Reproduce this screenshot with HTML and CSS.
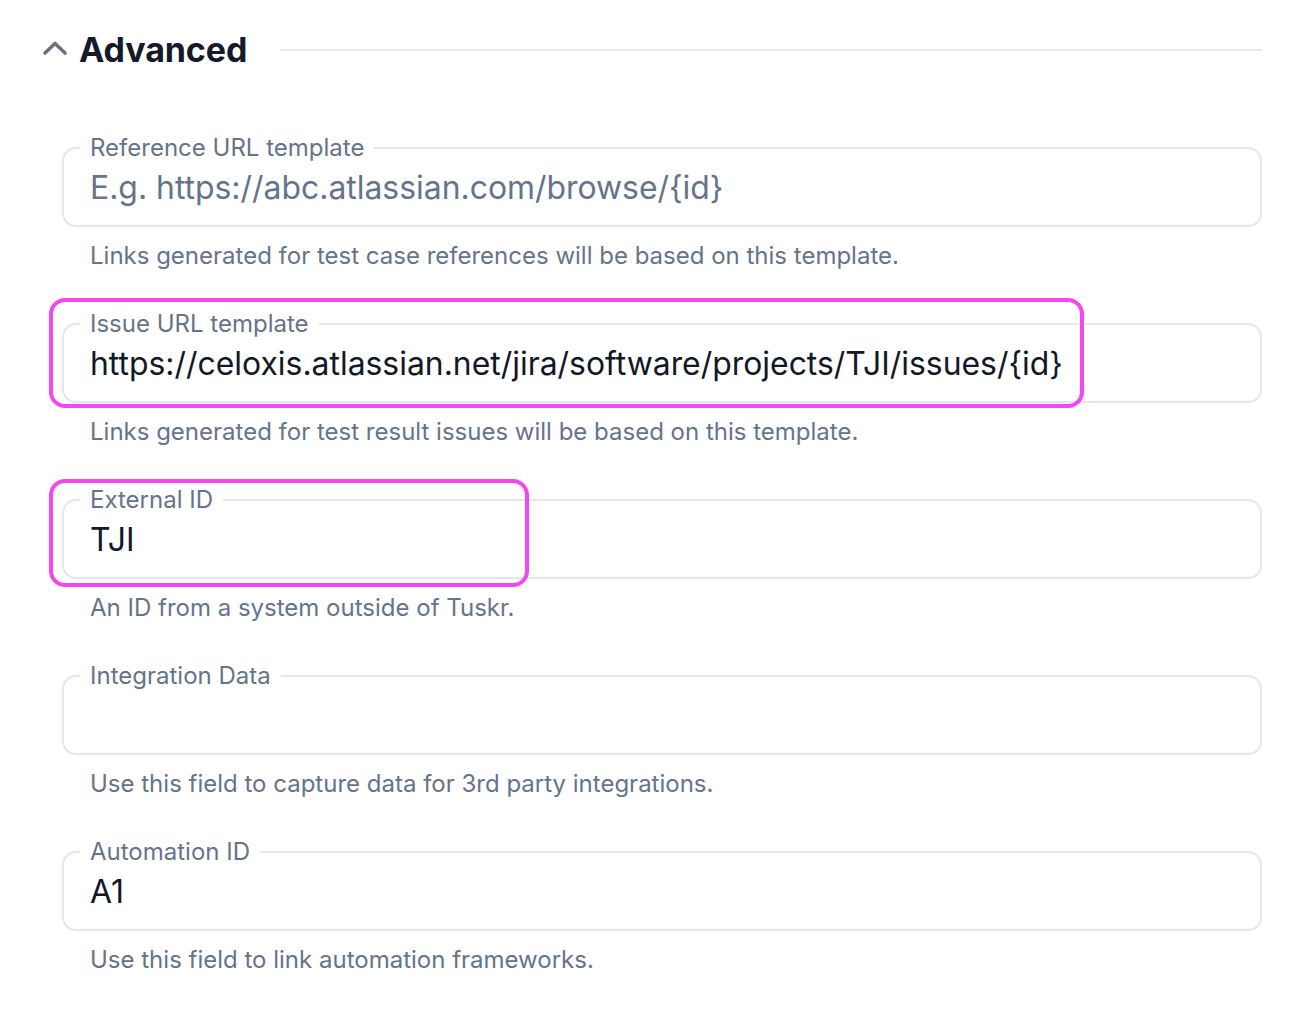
FILE: index.html
```html
<!DOCTYPE html>
<html>
<head>
    <title>Advanced</title>
    <link rel="stylesheet" href="styles.css">
</head>
<body>
    <div class="panel">
        <div class="section-head">
            <svg class="chevron" width="26" height="16" viewBox="0 0 26 16">
                <path d="M3 13 L13 3.5 L23 13" fill="none" stroke="#6b7280" stroke-width="3.6" stroke-linecap="round" stroke-linejoin="round"/>
            </svg>
            <h2>Advanced</h2>
            <div class="rule"></div>
        </div>

        <div class="fields">
            <div class="field">
                <fieldset>
                    <legend>Reference URL template</legend>
                    <input type="text" placeholder="E.g. https://abc.atlassian.com/browse/{id}">
                </fieldset>
                <p class="hint">Links generated for test case references will be based on this template.</p>
            </div>

            <div class="field">
                <div class="highlight highlight-issue"></div>
                <fieldset>
                    <legend>Issue URL template</legend>
                    <input type="text" value="https://celoxis.atlassian.net/jira/software/projects/TJI/issues/{id}">
                </fieldset>
                <p class="hint">Links generated for test result issues will be based on this template.</p>
            </div>

            <div class="field">
                <div class="highlight highlight-external"></div>
                <fieldset>
                    <legend>External ID</legend>
                    <input type="text" value="TJI">
                </fieldset>
                <p class="hint">An ID from a system outside of Tuskr.</p>
            </div>

            <div class="field">
                <fieldset>
                    <legend>Integration Data</legend>
                    <input type="text" value="">
                </fieldset>
                <p class="hint">Use this field to capture data for 3rd party integrations.</p>
            </div>

            <div class="field">
                <fieldset>
                    <legend>Automation ID</legend>
                    <input type="text" value="A1">
                </fieldset>
                <p class="hint">Use this field to link automation frameworks.</p>
            </div>
        </div>
    </div>
</body>
</html>
```

FILE: styles.css
```css
* {
    box-sizing: border-box;
}

body {
    margin: 0;
    padding: 0;
    background-color: #fff;
    font-family: Inter, "Noto Sans", sans-serif;
    color: #111827;
}

.panel {
    padding: 28px 52px 0 42px;
}

.section-head {
    display: flex;
    align-items: center;
    height: 44px;
}

.chevron {
    display: block;
    margin-right: 11px;
    margin-top: -4px;
}

.section-head h2 {
    margin: 0;
    font-size: 34px;
    font-weight: 700;
    line-height: 44px;
    color: #141a2c;
    letter-spacing: -0.1px;
}

.rule {
    flex: 1;
    height: 2px;
    background-color: #e9e9f3;
    margin-left: 34px;
}

.fields {
    margin-top: 63px;
    padding-left: 20px;
}

.field {
    position: relative;
    margin-bottom: 40px;
}

fieldset {
    margin: 0;
    border: 2px solid #e6e6f1;
    border-radius: 14px;
    padding: 0 16px 12px 16px;
}

legend {
    padding: 0 10px;
    font-size: 24px;
    line-height: 26px;
    color: #64748b;
}

input[type="text"] {
    display: block;
    width: 100%;
    height: 52px;
    border: none;
    outline: none;
    padding: 0 10px;
    font-family: Inter, "Noto Sans", sans-serif;
    font-size: 31.9px;
    color: #111827;
    background: transparent;
}

input::placeholder {
    color: #64748b;
    opacity: 1;
}

.hint {
    margin: 14px 0 0 0;
    padding-left: 28px;
    font-size: 24px;
    line-height: 30px;
    color: #64748b;
}

.highlight {
    position: absolute;
    border: 4px solid #f646ef;
    border-radius: 16px;
    pointer-events: none;
    left: -13px;
}

.highlight-issue {
    top: -13px;
    width: 1035px;
    height: 110px;
}

.highlight-external {
    top: -8px;
    width: 480px;
    height: 108px;
}
```
